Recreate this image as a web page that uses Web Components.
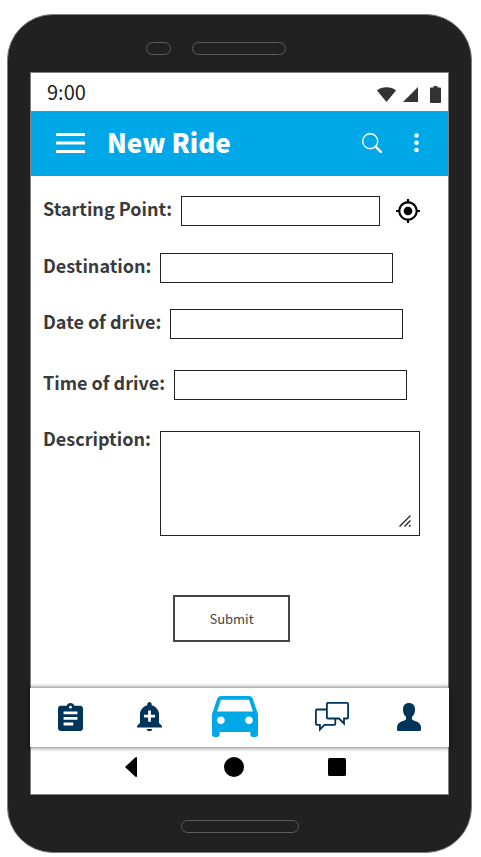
<!DOCTYPE html>
<html lang="en">
<head>
<meta charset="utf-8">
<meta name="viewport" content="width=device-width, initial-scale=1">
<title>New Ride</title>
<style>
  * { box-sizing: border-box; }
  body {
    margin: 0;
    min-height: 100vh;
    padding: 14px 9px 4px 7px;
    display: flex;
    background: #fff;
    color: #333;
    font-family: "Noto Sans CJK SC", "Noto Sans", sans-serif;
  }
</style>
</head>
<body>
<phone-frame>
  <status-bar time="9:00"></status-bar>
  <app-bar heading="New Ride"></app-bar>
  <ride-form></ride-form>
  <tab-bar></tab-bar>
  <system-bar></system-bar>
</phone-frame>

<script>
const BASE = `
  *, *::before, *::after { box-sizing: border-box; }
  svg { display: block; }
  button { margin: 0; padding: 0; border: 0; background: none; color: inherit; font: inherit; cursor: pointer; }
`;

function define(name, css, render) {
  customElements.define(name, class extends HTMLElement {
    connectedCallback() {
      if (this.shadowRoot) return;
      this.attachShadow({ mode: "open" }).innerHTML = `<style>${BASE}${css}</style>${render(this)}`;
    }
  });
}

define("phone-frame", `
  :host {
    flex: 1; min-width: 0; display: flex; flex-direction: column;
    background: #212121; border: 1px solid #808080; border-radius: 46px;
    padding: 0 22px;
  }
  .top, .bottom { height: 57px; display: flex; justify-content: center; }
  .top { gap: 21px; padding-top: 27px; padding-right: 47px; }
  .bottom { padding-top: 25px; }
  .pill { height: 13px; border: 1px solid #5c5c5c; border-radius: 7px; }
  .sensor { width: 25px; }
  .speaker { width: 94px; }
  .mic { width: 118px; }
  .screen { flex: 1; display: flex; flex-direction: column; background: #fff; border: 1px solid #808080; }
`, () => `
  <div class="top"><div class="pill sensor"></div><div class="pill speaker"></div></div>
  <div class="screen"><slot></slot></div>
  <div class="bottom"><div class="pill mic"></div></div>
`);

define("status-bar", `
  :host { display: flex; align-items: center; height: 38px; padding: 0 7px 0 16px; font-size: 20px; line-height: 24px; color: #222; }
  .time { flex: 1; }
  .icons { display: flex; align-items: center; fill: #333; padding-top: 4px; }
  .signal { margin: 0 12px 0 7px; }
`, el => `
  <span class="time">${el.getAttribute("time")}</span>
  <div class="icons">
    <svg width="19" height="15" viewBox="0 0 20 15" preserveAspectRatio="none" aria-label="Wi-Fi"><path d="M0 3.6Q4 .3 10 .3T20 3.6L10 15Z"/></svg>
    <svg class="signal" width="15" height="15" viewBox="0 0 15 15" aria-label="Signal"><path d="M15 0V15H0Z"/></svg>
    <svg width="11" height="17" viewBox="0 0 11 17" aria-label="Battery"><path d="M3.5 0h4v1.5H10a1 1 0 0 1 1 1V16a1 1 0 0 1-1 1H1a1 1 0 0 1-1-1V2.500a1 1 0 0 1 1-1h2.500Z"/></svg>
  </div>
`);

define("app-bar", `
  :host { display: flex; align-items: center; height: 65px; padding: 0 24px 2px 25px; background: #00a8e8; color: #fff; }
  h1 { flex: 1; margin: 0 0 2px 22px; font-size: 26px; line-height: 32px; font-weight: 900; }
  .more { width: 16px; display: flex; justify-content: center; margin-left: 26px; }
`, el => `
  <button aria-label="Menu"><svg width="29" height="20" viewBox="0 0 29 20" fill="#fff"><path d="M0 0h29v2.900H0zM0 8.500h29v2.900H0zM0 17h29v2.900H0z"/></svg></button>
  <h1>${el.getAttribute("heading")}</h1>
  <button aria-label="Search"><svg width="20" height="20" viewBox="0 0 20 20" fill="none" stroke="#fff"><circle cx="8.200" cy="8.200" r="7.500" stroke-width="1.400"/><path d="M13.600 13.600L19 19" stroke-width="2.200" stroke-linecap="round"/></svg></button>
  <button class="more" aria-label="More options"><svg width="5" height="20" viewBox="0 0 5 20" fill="#fff"><circle cx="2.500" cy="2.500" r="2.300"/><circle cx="2.500" cy="9.700" r="2.300"/><circle cx="2.500" cy="17" r="2.300"/></svg></button>
`);

define("form-field", `
  :host { display: flex; align-items: flex-start; gap: 9px; }
  label { flex: none; font-size: 18px; line-height: 24px; font-weight: 700; color: #3a3a3a; }
  input, textarea {
    display: block; width: 100%; margin: 0; padding: 4px 8px; border: 1px solid #222; border-radius: 0;
    background: #fff; color: #333; font: inherit; font-size: 16px; line-height: 20px; outline: none;
  }
  .box { position: relative; flex: 0 1 233px; min-width: 0; }
  :host([short]) .box { flex-basis: 199px; }
  :host([multiline]) .box { flex-basis: 260px; margin-top: 5px; }
  input { height: 30px; }
  textarea { height: 105px; resize: none; }
  .grip { position: absolute; right: 9px; bottom: 9px; pointer-events: none; }
`, el => `
  <label for="control">${el.getAttribute("label")}</label>
  <div class="box">${el.hasAttribute("multiline")
    ? `<textarea id="control"></textarea><svg class="grip" width="12" height="12" viewBox="0 0 12 12" stroke="#222" stroke-width="1.300" fill="none"><path d="M.5 11.500L11.500.5M5.500 11.500L11.500 5.500M10 11.500L11.500 10"/></svg>`
    : `<input id="control" type="text">`}</div>
  <slot></slot>
`);

define("ride-form", `
  :host { flex: 1; display: block; padding: 20px 28px 44px 12px; }
  form { display: flex; flex-direction: column; }
  .near { margin-top: 26px; }
  .mid { margin-top: 27px; }
  .far { margin-top: 31px; }
  .locate { margin: 2px -2px 0 6px; flex: none; }
  .submit {
    align-self: center; width: 117px; height: 47px; margin-top: 59px;
    border: 2px solid #444; background: #fff; font-size: 13px; line-height: 20px; color: #444;
  }
`, () => `
  <form>
    <form-field short label="Starting Point:">
      <button class="locate" type="button" aria-label="Use current location">
        <svg width="26" height="26" viewBox="0 0 24 24"><path d="M12 8c-2.210 0-4 1.790-4 4s1.790 4 4 4 4-1.790 4-4-1.790-4-4-4zm8.940 3c-.46-4.170-3.770-7.480-7.940-7.940V1h-2v2.060C6.830 3.520 3.520 6.830 3.060 11H1v2h2.060c.46 4.170 3.770 7.480 7.940 7.940V23h2v-2.060c4.170-.46 7.480-3.770 7.940-7.940H23v-2h-2.060zM12 19c-3.870 0-7-3.130-7-7s3.130-7 7-7 7 3.130 7 7-3.130 7-7 7z"/></svg>
      </button>
    </form-field>
    <form-field class="mid" label="Destination:"></form-field>
    <form-field class="near" label="Date of drive:"></form-field>
    <form-field class="far" label="Time of drive:"></form-field>
    <form-field class="near" multiline label="Description:"></form-field>
    <button class="submit" type="button">Submit</button>
  </form>
`);

define("tab-bar", `
  :host { display: block; position: relative; margin: 0 -1px; background: #fff; box-shadow: 0 0 4px 1px rgba(0,0,0,.5); }
  nav { display: grid; grid-template-columns: 81fr 77fr 93fr 102fr 52fr; align-items: center; justify-items: center; height: 59px; padding: 0 14px 2px 0; }
  a { display: block; color: #003459; }
  a[aria-current] { color: #00a8e8; }
  svg { fill: currentColor; }
`, () => `
  <nav aria-label="Main">
    <a href="#rides" aria-label="Rides"><svg width="25" height="28" viewBox="3 1 18 20" preserveAspectRatio="none"><path d="M19 3h-4.180C14.400 1.840 13.300 1 12 1c-1.300 0-2.400.84-2.820 2H5c-1.100 0-2 .9-2 2v14c0 1.100.9 2 2 2h14c1.100 0 2-.9 2-2V5c0-1.100-.9-2-2-2zm-7 0c.55 0 1 .45 1 1s-.45 1-1 1-1-.45-1-1 .45-1 1-1zm2 14H7v-2h7v2zm3-4H7v-2h10v2zm0-4H7V7h10v2z"/></svg></a>
    <a href="#alerts" aria-label="Alerts"><svg width="25" height="29" viewBox="3 2 18 20.500" preserveAspectRatio="none"><path d="M10.010 21.010c0 1.100.89 1.490 1.990 1.490s1.990-.39 1.990-1.490h-3.980zm8.870-4.190V11c0-3.250-2.250-5.970-5.290-6.690v-.72C13.590 2.710 12.880 2 12 2s-1.590.71-1.590 1.590v.72C7.370 5.030 5.120 7.750 5.120 11v5.820L3 18.940V20h18v-1.060l-2.120-2.120zM16 13.010h-3v3h-2v-3H8V11h3V8h2v3h3v2.010z"/></svg></a>
    <a href="#new" aria-label="New ride" aria-current="page"><svg width="46" height="41" viewBox="3 5 18 16" preserveAspectRatio="none"><path d="M18.920 6.010C18.720 5.420 18.160 5 17.500 5h-11c-.66 0-1.210.42-1.420 1.010L3 12v8c0 .55.45 1 1 1h1c.55 0 1-.45 1-1v-1h12v1c0 .55.45 1 1 1h1c.55 0 1-.45 1-1v-8l-2.080-5.990zM6.500 16c-.83 0-1.500-.67-1.500-1.500S5.670 13 6.500 13s1.500.67 1.500 1.500S7.330 16 6.500 16zm11 0c-.83 0-1.500-.67-1.500-1.500s.67-1.500 1.500-1.500 1.500.67 1.500 1.500-.67 1.500-1.500 1.500zM5 11l1.500-4.500h11L19 11H5z"/></svg></a>
    <a href="#chat" aria-label="Messages"><svg width="34" height="30" viewBox="0 0 34 30" style="fill:none" stroke="currentColor" stroke-width="1.800"><path d="M11.900 1.900Q11.900.9 12.900.9H32.100Q33.100.9 33.100 1.900V15.500Q33.100 16.500 32.100 16.500H29V21.500L24 16.500H12.900Q11.900 16.500 11.900 15.500Z"/><path d="M11.500 7.500H1.900Q.9 7.500.9 8.500V21.800Q.9 22.800 1.900 22.800H4.900V27.500L9.500 22.800H19.300Q20.300 22.800 20.300 21.800V17"/></svg></a>
    <a href="#profile" aria-label="Profile"><svg width="24" height="28" viewBox="0 0 24 28"><path d="M12 0C15.800 0 18 2.300 18 6.500C18 9.700 17 12.200 15 13.800V16C15 17 16 17.300 18 18C22 19.400 24 21 24 25V26.500Q24 28 22.500 28H1.500Q0 28 0 26.500V25C0 21 2 19.400 6 18C8 17.300 9 17 9 16V13.800C7 12.200 6 9.700 6 6.500C6 2.300 8.200 0 12 0Z"/></svg></a>
  </nav>
`);

define("system-bar", `
  :host { display: grid; grid-template-columns: repeat(3, 1fr); align-items: center; justify-items: center; height: 47px; padding: 0 60px 8px 48px; }
`, () => `
  <button aria-label="Back"><svg width="12" height="20" viewBox="0 0 12 20"><path d="M0 10L10.500.3Q12-.3 12 1V19Q12 20.300 10.500 19.700Z"/></svg></button>
  <button aria-label="Home"><svg width="20" height="20" viewBox="0 0 20 20"><circle cx="10" cy="10" r="10"/></svg></button>
  <button aria-label="Recent apps"><svg width="18" height="18" viewBox="0 0 18 18"><rect width="18" height="18" rx="1.500"/></svg></button>
`);
</script>
</body>
</html>
